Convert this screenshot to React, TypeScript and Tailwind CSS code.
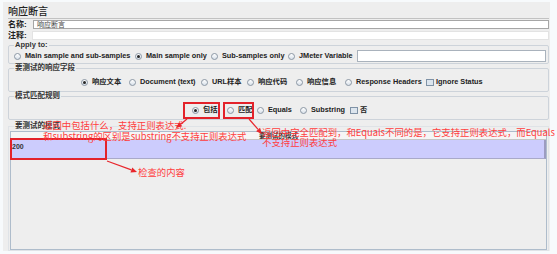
import React from 'react';

type Opt = {
  label: string;
  w: string;
  checked?: boolean;
  box?: boolean;
};

const applyOpts: Opt[] = [
  { label: 'Main sample and sub-samples', w: 'w-[121px]' },
  { label: 'Main sample only', w: 'w-[76px]', checked: true },
  { label: 'Sub-samples only', w: 'w-[77px]' },
  { label: 'JMeter Variable', w: 'w-[66px]' },
];

const fieldOpts: Opt[] = [
  { label: '响应文本', w: 'w-[48px]', checked: true },
  { label: 'Document (text)', w: 'w-[72px]' },
  { label: 'URL样本', w: 'w-[46px]' },
  { label: '响应代码', w: 'w-[49px]' },
  { label: '响应信息', w: 'w-[49px]' },
  { label: 'Response Headers', w: 'w-[81px]' },
  { label: 'Ignore Status', w: 'w-[60px]', box: true },
];

const ruleOpts: Opt[] = [
  { label: '包括', w: 'w-[35px]', checked: true },
  { label: '匹配', w: 'w-[30px]' },
  { label: 'Equals', w: 'w-[43px]' },
  { label: 'Substring', w: 'w-[50px]' },
  { label: '否', w: 'w-[20px]', box: true },
];

function Radio({ checked }: { checked?: boolean }) {
  return (
    <span className="w-[7px] h-[7px] shrink-0 rounded-full border border-[#8b97a4] bg-linear-to-b from-white to-[#d9e1ea] flex items-center justify-center">
      {checked && <span className="w-[3px] h-[3px] rounded-full bg-[#262626]" />}
    </span>
  );
}

function Check() {
  return <span className="w-[8px] h-[7px] shrink-0 border border-[#7f92a6] bg-[#dce5ee]" />;
}

function Option({ opt }: { opt: Opt }) {
  return (
    <div className={`${opt.w} shrink-0 flex items-center ${opt.box ? 'gap-[2px]' : 'gap-[4px]'}`}>
      {opt.box ? <Check /> : <Radio checked={opt.checked} />}
      <span className="whitespace-nowrap text-[7.3px] leading-[8px] font-bold text-[#222]">{opt.label}</span>
    </div>
  );
}

function Group({ title, children }: { title: string; children: React.ReactNode }) {
  return (
    <fieldset className="border border-[#cdd3da] rounded-[2px] px-[1px]">
      <legend className="ml-[4px] px-[1px] text-[7.5px] leading-[8px] font-bold text-[#333]">{title}</legend>
      {children}
    </fieldset>
  );
}

// tip of the arrow is (x2, y2)
function Arrow({ x1, y1, x2, y2 }: { x1: number; y1: number; x2: number; y2: number }) {
  const len = Math.hypot(x2 - x1, y2 - y1);
  const dx = (x2 - x1) / len;
  const dy = (y2 - y1) / len;
  const bx = x2 - dx * 6;
  const by = y2 - dy * 6;
  const px = -dy * 2.6;
  const py = dx * 2.6;
  const head = `${x2},${y2} ${bx + px},${by + py} ${bx - px},${by - py}`;
  return (
    <g>
      <line x1={x1} y1={y1} x2={bx} y2={by} stroke="#e8262c" strokeWidth={1.2} />
      <polygon points={head} fill="#e8262c" />
    </g>
  );
}

export default function App() {
  return (
    <div className="relative w-[557px] h-[254px] overflow-hidden bg-[#f7fafc] font-['Liberation_Sans','Noto_Sans_CJK_SC',sans-serif]">
      <div className="mt-[2px] ml-[3px] w-[547px] h-[249px] bg-[#eeeeee] pl-[5px] pr-[1px] flex flex-col">
        <div className="h-[16px] flex items-center pt-[2px] text-[10px] font-medium text-[#222]">响应断言</div>

        <div className="border-t border-[#c2c2c2]">
          <div className="h-[11px] flex items-center">
            <span className="w-[25px] text-[8px] leading-[9px] font-bold text-[#222]">名称:</span>
            <div className="flex-1 h-[9px] bg-white border border-[#a6a6a6] flex items-center pl-[3px] text-[7px] leading-[7px] text-[#444]">
              响应断言
            </div>
          </div>
          <div className="h-[11px] flex items-center">
            <span className="w-[24px] text-[8px] leading-[9px] font-bold text-[#222]">注释:</span>
            <div className="flex-1 h-[9px] bg-white border border-[#e3e3e3]" />
          </div>
        </div>

        <Group title="Apply to:">
          <div className="flex items-center h-[12px] mt-[1px] mb-[1px] pl-[4px] pr-[1px]">
            {applyOpts.map((o) => (
              <Option key={o.label} opt={o} />
            ))}
            <div className="flex-1 ml-[3px] h-[12px] bg-white border border-[#a9b2bc]" />
          </div>
        </Group>

        <Group title="要测试的响应字段">
          <div className="flex items-center h-[12px] mt-[4px] mb-[3px] pl-[71px]">
            {fieldOpts.map((o) => (
              <Option key={o.label} opt={o} />
            ))}
          </div>
        </Group>

        <Group title="模式匹配规则">
          <div className="flex items-center h-[12px] mt-[4px] mb-[3px] pl-[182px]">
            {ruleOpts.map((o) => (
              <Option key={o.label} opt={o} />
            ))}
          </div>
        </Group>

        <fieldset className="mt-[1px] border border-[#dfe3e7] px-[1px] flex-1 min-h-0">
          <legend className="ml-[4px] px-[1px] text-[7.5px] leading-[10px] font-bold text-[#333]">要测试的模式</legend>
          <div className="h-[119px] border border-[#aebccb] flex flex-col">
            <div className="h-[8px] bg-[#f5f5f5] border-b border-[#c6c6c6] flex items-center justify-center text-[6.5px] leading-[7px] font-bold text-[#333]">
              要测试的模式
            </div>
            <div className="h-[19px] bg-[#ccccfd] border-b border-[#a9a9c9] border-r-2 border-r-[#9c9cc0] pl-[1px] pt-[3px] text-[7px] leading-[8px] font-bold text-[#333]">
              200
            </div>
          </div>
        </fieldset>
      </div>

      {/* red annotation overlay */}
      <div className="absolute left-[183px] top-[102px] w-[37px] h-[17px] border-2 border-[#e3222a]" />
      <div className="absolute left-[223px] top-[102px] w-[31px] h-[17px] border-2 border-[#e3222a]" />
      <div className="absolute left-[10px] top-[138px] w-[97px] h-[22px] border-2 border-[#e3222a]" />

      <div className="absolute left-[43px] top-[120px] font-['Noto_Sans_CJK_SC',sans-serif] text-[9.4px] leading-[11px] text-[#ff3d3d] whitespace-nowrap">
        <div>返回中包括什么，支持正则表达式.</div>
        <div>和substring的区别是substring不支持正则表达式</div>
      </div>
      <div className="absolute left-[262px] top-[127px] font-['Noto_Sans_CJK_SC',sans-serif] text-[9.4px] leading-[10px] text-[#ff3d3d] whitespace-nowrap">
        <div>返回中完全匹配到，和Equals不同的是，它支持正则表达式，而Equals</div>
        <div>不支持正则表达式</div>
      </div>
      <div className="absolute left-[138px] top-[167px] font-['Noto_Sans_CJK_SC',sans-serif] text-[9.4px] leading-[11px] text-[#ff3d3d] whitespace-nowrap">
        检查的内容
      </div>

      <svg className="absolute inset-0 pointer-events-none" width={557} height={254}>
        <Arrow x1={187} y1={119} x2={176} y2={128} />
        <Arrow x1={249} y1={119} x2={262} y2={134} />
        <Arrow x1={107} y1={161} x2={137} y2={172} />
      </svg>
    </div>
  );
}
